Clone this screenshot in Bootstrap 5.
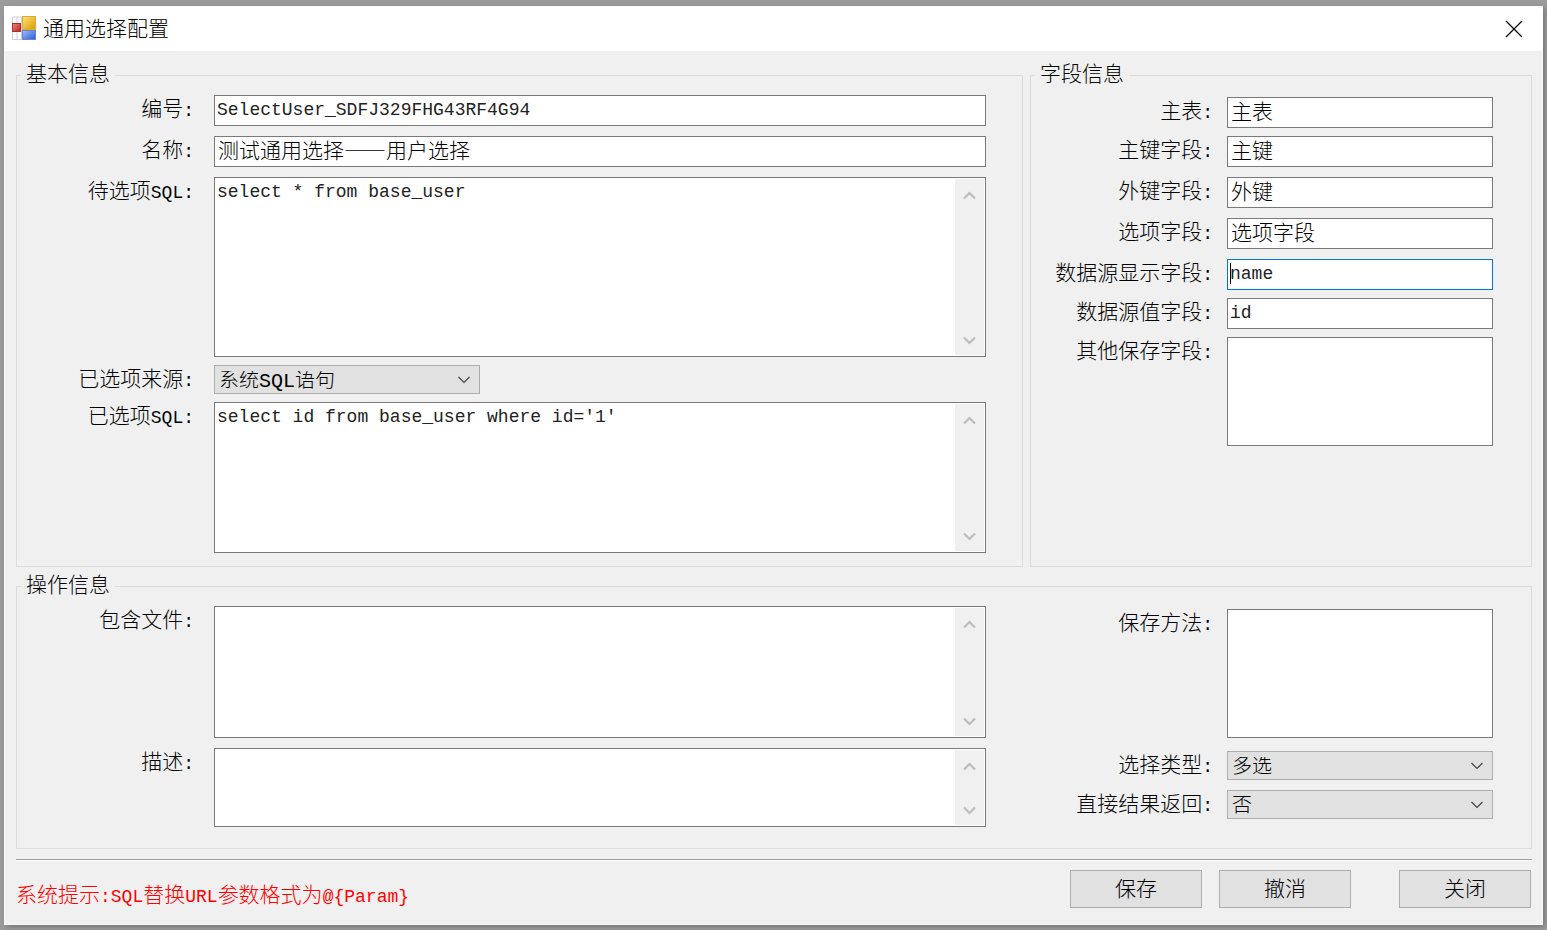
<!DOCTYPE html>
<html lang="zh-CN">
<head>
<meta charset="utf-8">
<meta name="viewport" content="width=device-width, initial-scale=1">
<title>通用选择配置</title>
<link rel="stylesheet" href="https://cdn.jsdelivr.net/npm/bootstrap@5.3.0/dist/css/bootstrap.min.css">
<style>
:root{--mono:"Liberation Mono","Noto Sans CJK SC",monospace;--cjk:"Noto Sans CJK SC",sans-serif}
body{background:#9b9b9b;color:#000;font-family:var(--cjk);font-weight:300;font-size:21px;line-height:24px;padding:6px 4px}
.dialog{background:#f0f0f0;box-shadow:inset 0 0 0 1px #f8f8f8,2px 2px 5px #777}
.titlebar{background:#fff;height:45px;padding:0 20px 0 8px}
.titlebar h1{font-size:21px;line-height:28px;font-weight:300;margin:0 auto 0 6px;padding-bottom:4px}
.dialog-main{padding:12px 11px 16px 12px}
fieldset{border:1px solid #dcdcdc}
.group-gap{gap:7px}
legend{float:none;width:auto;font-size:21px;line-height:18px;padding:0 5px 6px;margin:0 0 0 4px;height:24px}
.side{flex:0 0 502px}
.fields{display:grid;align-content:start}
.fields label{text-align:right;white-space:nowrap}
.left-fields{grid-template-columns:177px minmax(0,1fr);column-gap:20px;padding:8px 36px 0 0}
.right-fields{grid-template-columns:minmax(0,1fr) 266px;column-gap:14px;padding:10px 38px 0 0}
.end-group .right-fields{padding-top:11px}
.en{font-family:var(--mono);font-size:18px}
.form-control,.form-select,.memo{border:1px solid #7a7a7a;border-radius:0;color:#000;background-color:#fff;font-weight:300}
.form-control{font-family:var(--cjk);font-size:21px;line-height:23px;padding:0 3px 6px;height:31px;resize:none}
.form-control.latin{font-family:var(--mono);font-size:18px;padding:0 3px 1px 2px;color:#222}
.form-control.tall{height:109px}
.form-control.method{height:129px}
.form-control.current{border-color:#0078d7;background-image:linear-gradient(#000,#000);background-size:1px 21px;background-position:2px 3px;background-repeat:no-repeat}
.form-select{font-family:var(--mono);height:29px;font-size:20px;line-height:22px;padding:5px 30px 0 4px;background-color:#e1e1e1;border-color:#adadad;background-size:12px 8px;background-position:right 9px center;background-image:url("data:image/svg+xml,%3Csvg xmlns='http://www.w3.org/2000/svg' viewBox='0 0 12 8'%3E%3Cpath d='M.5 1 6 6.500 11.500 1' fill='none' stroke='%23444' stroke-width='1.200'/%3E%3C/svg%3E")}
.source{width:266px}
.memo{display:flex}
.memo textarea{flex:1;min-width:0;border:0;outline:0;resize:none;padding:1px 2px;font-family:var(--mono);font-size:18px;line-height:26px;color:#222;overflow:hidden}
.track{width:29px;margin:1px;background:#f0f0f0;display:flex;flex-direction:column;justify-content:space-between;align-items:center;padding:12px 0 10px}
.track button{border:0;background:none;padding:0;line-height:0}
.track svg{width:13px;height:9px;fill:none;stroke:#bdbdbd;stroke-width:2.2}
.h180{height:180px}.h151{height:151px}.h132{height:132px}.h79{height:79px}
.mb-8{margin-bottom:8px}.mb-10{margin-bottom:10px}.mb-13{margin-bottom:13px}
.end-group{margin-top:7px;padding-bottom:21px}
.rule{height:2px;margin:10px 0 0;border:0;border-top:1px solid #a0a0a0;background:#fff;opacity:1}
.hint{color:#f00;padding-top:20px}
.actions{padding:9px 1px 0 0}
.actions .btn{width:132px;height:38px;border:1px solid #adadad;border-radius:0;background:#e1e1e1;color:#000;font-size:21px;font-weight:300;line-height:28px;padding:0 0 4px}
.btn-save{margin-right:17px}
.btn-close-win{border:0;background:none;padding:0;line-height:0}
</style>
<script src="https://cdn.jsdelivr.net/npm/bootstrap@5.3.0/dist/js/bootstrap.bundle.min.js"></script>
</head>
<body>
<div class="dialog">
  <header class="titlebar d-flex align-items-center">
    <svg width="25" height="25" viewBox="0 0 25 25" aria-hidden="true">
      <defs>
        <linearGradient id="gy" x2="1" y2="1"><stop stop-color="#ffe37a"/><stop offset="1" stop-color="#d89a00"/></linearGradient>
        <linearGradient id="gr" x2="1" y2="1"><stop stop-color="#f08a78"/><stop offset="1" stop-color="#c01c1c"/></linearGradient>
        <linearGradient id="gb" x2="1" y2="1"><stop stop-color="#9dbcff"/><stop offset="1" stop-color="#2c5cd0"/></linearGradient>
      </defs>
      <path d="M.5 1v22.500h9V1zM5 1v22" fill="#fff" stroke="#d0d0d8"/>
      <rect x="10.500" y=".5" width="13" height="13" fill="url(#gy)" stroke="#d8aa38"/>
      <rect x=".5" y="7.500" width="8" height="8" fill="url(#gr)" stroke="#a83030"/>
      <rect x="10.500" y="14.500" width="13" height="9" fill="url(#gb)" stroke="#6484cc"/>
    </svg>
    <h1>通用选择配置</h1>
    <button type="button" class="btn-close-win" aria-label="关闭窗口"><svg width="18" height="18" viewBox="0 0 18 18"><path d="m1 1 16 16M17 1 1 17" fill="none" stroke="#000" stroke-width="1.200"/></svg></button>
  </header>
  <form class="dialog-main">
    <div class="d-flex group-gap">
      <fieldset class="flex-grow-1">
        <legend>基本信息</legend>
        <div class="fields left-fields">
          <label for="code">编号<span class="en">:</span></label>
          <input id="code" class="form-control latin mb-10" value="SelectUser_SDFJ329FHG43RF4G94">
          <label for="title">名称<span class="en">:</span></label>
          <input id="title" class="form-control mb-10" value="测试通用选择——用户选择">
          <label for="sql1">待选项<span class="en">SQL:</span></label>
          <div class="memo h180 mb-8"><textarea id="sql1">select * from base_user</textarea><div class="track"><button type="button" aria-label="向上"><svg viewBox="0 0 13 9"><path d="m1 7.500 5.500-5.500L12 7.500"/></svg></button><button type="button" aria-label="向下"><svg viewBox="0 0 13 9"><path d="m1 1.500 5.500 5.500L12 1.500"/></svg></button></div></div>
          <label for="source">已选项来源<span class="en">:</span></label>
          <select id="source" class="form-select source mb-8"><option>系统SQL语句</option></select>
          <label for="sql2">已选项<span class="en">SQL:</span></label>
          <div class="memo h151 mb-13"><textarea id="sql2">select id from base_user where id='1'</textarea><div class="track"><button type="button" aria-label="向上"><svg viewBox="0 0 13 9"><path d="m1 7.500 5.500-5.500L12 7.500"/></svg></button><button type="button" aria-label="向下"><svg viewBox="0 0 13 9"><path d="m1 1.500 5.500 5.500L12 1.500"/></svg></button></div></div>
        </div>
      </fieldset>
      <fieldset class="side">
        <legend>字段信息</legend>
        <div class="fields right-fields">
          <label for="f1">主表<span class="en">:</span></label>
          <input id="f1" class="form-control mb-8" value="主表">
          <label for="f2">主键字段<span class="en">:</span></label>
          <input id="f2" class="form-control mb-10" value="主键">
          <label for="f3">外键字段<span class="en">:</span></label>
          <input id="f3" class="form-control mb-10" value="外键">
          <label for="f4">选项字段<span class="en">:</span></label>
          <input id="f4" class="form-control mb-10" value="选项字段">
          <label for="f5">数据源显示字段<span class="en">:</span></label>
          <input id="f5" class="form-control latin current mb-8" value="name">
          <label for="f6">数据源值字段<span class="en">:</span></label>
          <input id="f6" class="form-control latin mb-8" value="id">
          <label for="f7">其他保存字段<span class="en">:</span></label>
          <textarea id="f7" class="form-control tall"></textarea>
        </div>
      </fieldset>
    </div>
    <fieldset class="end-group">
      <legend>操作信息</legend>
      <div class="d-flex group-gap">
        <div class="fields left-fields flex-grow-1">
          <label for="files">包含文件<span class="en">:</span></label>
          <div class="memo h132 mb-10"><textarea id="files"></textarea><div class="track"><button type="button" aria-label="向上"><svg viewBox="0 0 13 9"><path d="m1 7.500 5.500-5.500L12 7.500"/></svg></button><button type="button" aria-label="向下"><svg viewBox="0 0 13 9"><path d="m1 1.500 5.500 5.500L12 1.500"/></svg></button></div></div>
          <label for="desc">描述<span class="en">:</span></label>
          <div class="memo h79"><textarea id="desc"></textarea><div class="track"><button type="button" aria-label="向上"><svg viewBox="0 0 13 9"><path d="m1 7.500 5.500-5.500L12 7.500"/></svg></button><button type="button" aria-label="向下"><svg viewBox="0 0 13 9"><path d="m1 1.500 5.500 5.500L12 1.500"/></svg></button></div></div>
        </div>
        <div class="fields right-fields side">
          <label for="method">保存方法<span class="en">:</span></label>
          <textarea id="method" class="form-control method mb-13"></textarea>
          <label for="kind">选择类型<span class="en">:</span></label>
          <select id="kind" class="form-select mb-10"><option>多选</option></select>
          <label for="direct">直接结果返回<span class="en">:</span></label>
          <select id="direct" class="form-select"><option>否</option></select>
        </div>
      </div>
    </fieldset>
    <hr class="rule">
    <div class="d-flex justify-content-between">
      <div class="hint">系统提示<span class="en">:SQL</span>替换<span class="en">URL</span>参数格式为<span class="en">@{Param}</span></div>
      <div class="actions d-flex">
        <button type="submit" class="btn btn-save">保存</button>
        <button type="reset" class="btn me-5">撤消</button>
        <button type="button" class="btn">关闭</button>
      </div>
    </div>
  </form>
</div>
</body>
</html>
